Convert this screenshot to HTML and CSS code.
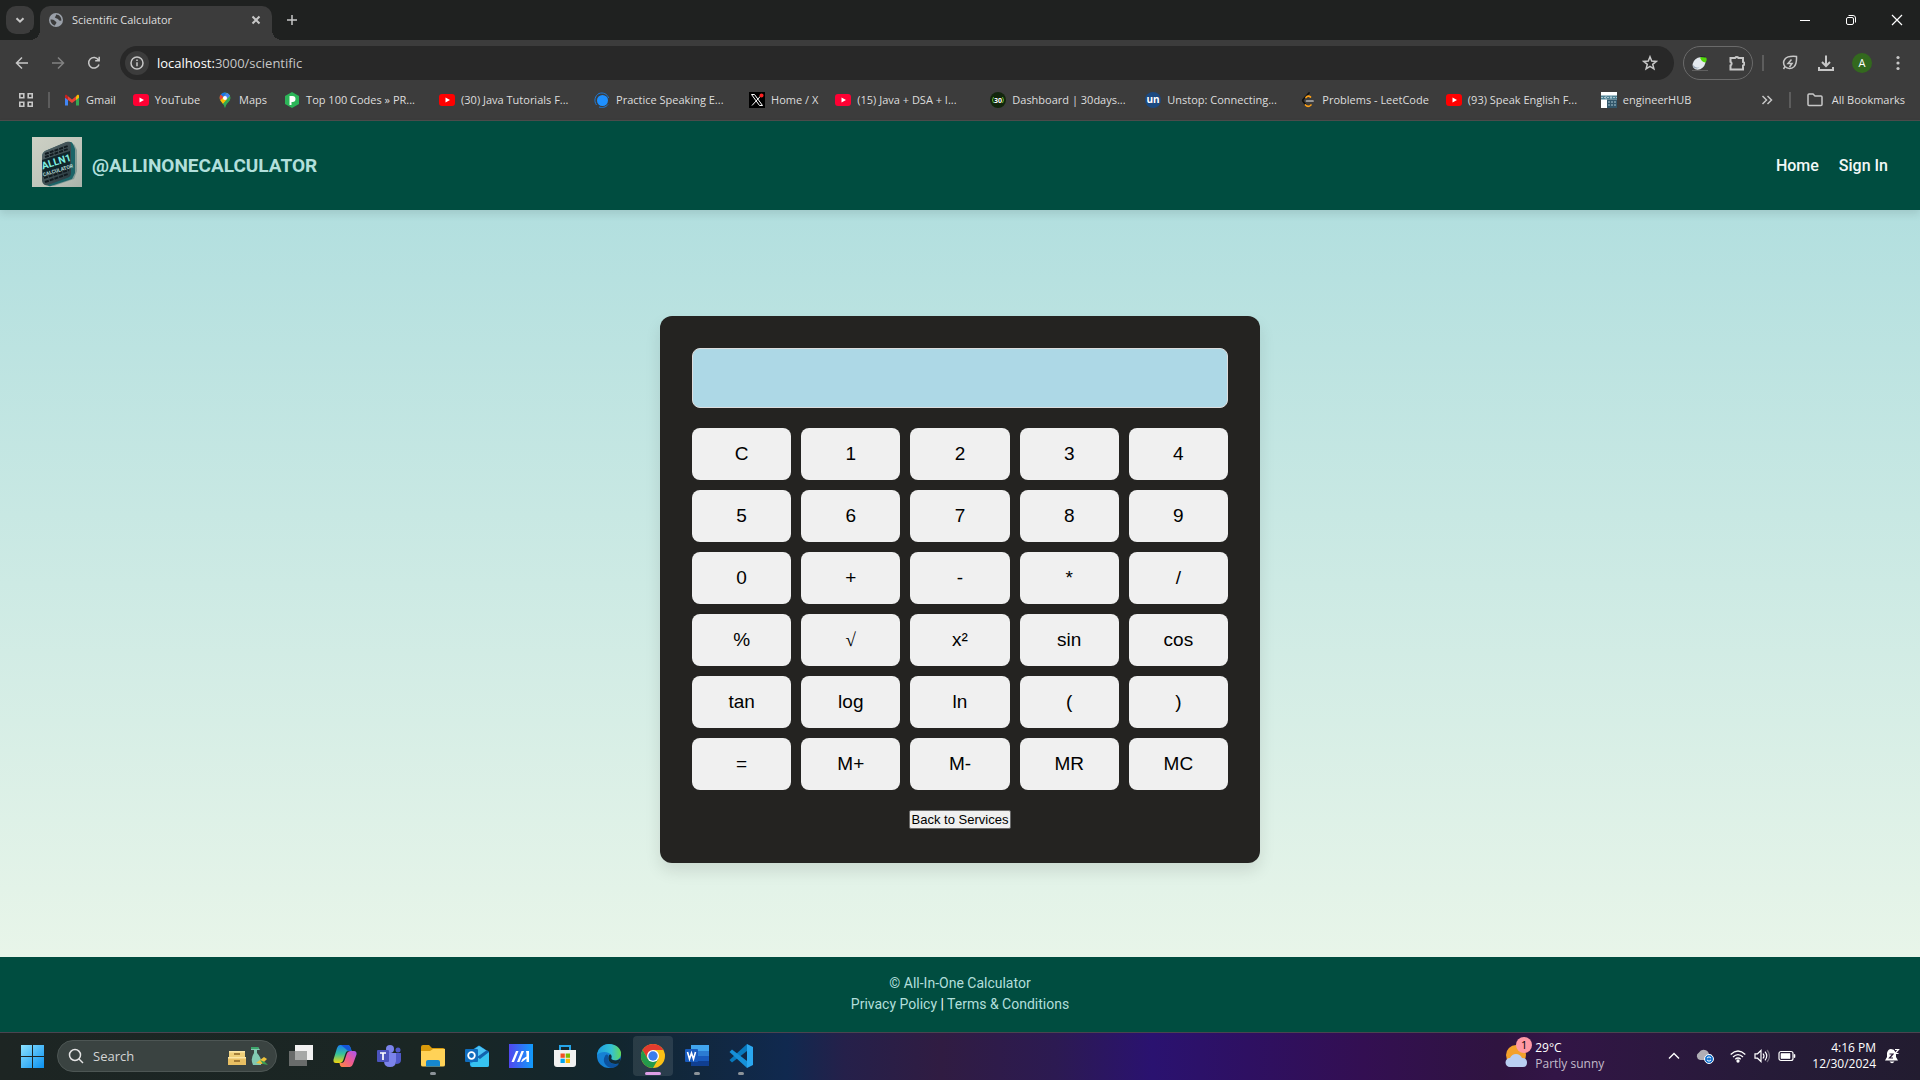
FILE: index.html
```html
<!DOCTYPE html>
<html lang="en">
<head>
<meta charset="utf-8">
<title>Scientific Calculator</title>
<link rel="stylesheet" href="styles.css">
</head>
<body>
<div class="desktop">

  <div class="tabstrip">
    <button class="tab-search" aria-label="Search tabs"><svg width="12" height="12" viewBox="0 0 12 12" class="line bold"><path d="M2.500 4.200 6 7.700 9.500 4.200"/></svg></button>
    <div class="tab">
      <svg width="14" height="14" viewBox="0 0 14 14"><circle cx="7" cy="7" r="7" fill="#9aa0a9"/><path d="M1.500 6.500c2 .2 3.500-.2 4.200 1.200.5 1 1.800.6 1.700 2-.1 1.400-1.300 1.300-1.500 2.800C3.500 12 1.400 9.500 1.500 6.500ZM7 1.500c-.3 1.500.2 1.900-1.300 2.600.6 1.500 2 1 3.200 1.800.9.600.7 1.900 2.500 1.800l1-.2c.2-3-2-6-5.400-6Z" fill="#3c3c3c"/></svg>
      <span class="tab-title">Scientific Calculator</span>
      <button class="bare" aria-label="Close tab"><svg width="14" height="14" viewBox="0 0 14 14" class="line bold"><path d="m3.500 3.500 7 7m0-7-7 7"/></svg></button>
    </div>
    <button class="bare new-tab" aria-label="New tab"><svg width="14" height="14" viewBox="0 0 14 14" class="line"><path d="M7 2v10M2 7h10"/></svg></button>
    <div class="window-controls">
      <button class="bare" aria-label="Minimize"><svg width="12" height="12" viewBox="0 0 12 12"><path d="M1 6.500h10" stroke="#fff"/></svg></button>
      <button class="bare" aria-label="Restore"><svg width="12" height="12" viewBox="0 0 12 12" fill="none" stroke="#fff"><rect x="1.500" y="3.500" width="7" height="7" rx="1.500"/><path d="M3.500 1.500H8A2.500 2.500 0 0 1 10.500 4v4.500"/></svg></button>
      <button class="bare" aria-label="Close"><svg width="12" height="12" viewBox="0 0 12 12" stroke="#fff" stroke-width="1.200"><path d="m1 1 10 10M11 1 1 11"/></svg></button>
    </div>
  </div>

  <div class="toolbar">
    <div class="nav-buttons">
      <button class="bare" aria-label="Back"><svg width="16" height="16" viewBox="0 0 16 16" class="line"><path d="M14 8H3M8 2.500 2.500 8 8 13.500"/></svg></button>
      <button class="bare dim" aria-label="Forward"><svg width="16" height="16" viewBox="0 0 16 16" class="line"><path d="M2 8h11M8 2.500 13.500 8 8 13.500"/></svg></button>
      <button class="bare" aria-label="Reload"><svg width="16" height="16" viewBox="0 0 16 16" class="line"><path d="M13 9.500A5.300 5.300 0 1 1 12.500 5M13.200 1.800v4H9.200"/></svg></button>
    </div>
    <div class="omnibox">
      <span class="site-info"><svg width="14" height="14" viewBox="0 0 14 14" class="line"><circle cx="7" cy="7" r="6"/><path d="M7 6.200v4M7 3.500v1.500"/></svg></span>
      <span class="url"><b>localhost:</b>3000/scientific</span>
      <button class="bare" aria-label="Bookmark this tab"><svg width="16" height="16" viewBox="0 0 16 16" class="line"><path d="m8 1.800 1.700 4.300 4.500.3-3.500 2.900 1.200 4.500L8 11.300l-3.900 2.500 1.200-4.500-3.500-2.900 4.500-.3z"/></svg></button>
    </div>
    <div class="extensions">
      <svg width="16" height="16" viewBox="0 0 16 16"><path d="M0 15.500h16" stroke="#606060"/><ellipse cx="7" cy="8.500" rx="7" ry="5.500" transform="rotate(-40 7 8.500)" fill="#e4e9ee"/><path d="M1 10c0 3 3 4.500 6.500 2.500-3 .5-5-.5-6.500-2.500" fill="#8fa0b0"/><path d="M8 2.500c1 3 2.500 4.500 5.500 5 1.500-2 1.500-4 .5-5-2-1-4-1-6 0" fill="#53d80a"/><path d="M8.500 1.500 13.500 2" stroke="#223"/></svg>
      <svg width="16" height="16" viewBox="0 0 16 16" class="line wide"><path d="M1.500 3H6a2 1.800 0 0 1 3.500 0H14v4a1.800 1.800 0 0 1 0 3.500v4H1.500v-4a2 2 0 0 0 0-3.600z"/></svg>
    </div>
    <span class="divider"></span>
    <div class="toolbar-end">
      <button class="bare" aria-label="Energy saver"><svg width="16" height="16" viewBox="0 0 16 16" class="line"><path d="M14.500 1.500C9 1 5 1.500 3 4c-1.800 2.300-1.500 5.500 0 7.500 2.300 2.500 6.500 2.500 9 .2 2.800-2.700 2.700-6.700 2.500-10.200ZM3 11.500 1.500 14M9.500 4.500 6 8.500h4L7.500 12"/></svg></button>
      <button class="bare" aria-label="Downloads"><svg width="18" height="18" viewBox="0 0 18 18" class="line bold"><path d="M9 1.500v10M5 8l4 4 4-4M2 13v3h14v-3"/></svg></button>
      <button class="avatar" aria-label="Profile">A</button>
      <button class="bare" aria-label="Menu"><svg width="16" height="16" viewBox="0 0 16 16" fill="#c7c7c7"><circle cx="8" cy="2.500" r="1.600"/><circle cx="8" cy="8" r="1.600"/><circle cx="8" cy="13.500" r="1.600"/></svg></button>
    </div>
  </div>

  <div class="bookmarks">
    <svg class="apps" width="14" height="14" viewBox="0 0 14 14" fill="none" stroke="#c7c7c7" stroke-width="1.600"><path d="M.8.800h4v4h-4zM9.200.800h4v4h-4zM.8 9.200h4v4h-4zM9.200 9.200h4v4h-4z"/></svg>
    <span class="divider"></span>
    <nav class="bookmark-list">
      <a href="#"><svg width="16" height="16" viewBox="0 0 16 16"><path d="M1 5v8.500h3V7z" fill="#4285f4"/><path d="M15 5v8.500h-3V7z" fill="#34a853"/><path d="M12 4.500V8l3-2.200V4c0-1.500-1.700-2-3 .5" fill="#fbbc04"/><path d="M4 4.300 8 7.500l4-3.200V8l-4 3-4-3z" fill="#ea4335"/><path d="M1 4c0-1.600 1.700-2 3 .3V8L1 5.800z" fill="#c5221f"/></svg><span>Gmail</span></a>
      <a href="#"><svg width="16" height="16" viewBox="0 0 16 16"><rect y="2" width="16" height="12" rx="3" fill="#ff0033"/><path d="m6.500 5.500 4.500 2.500-4.500 2.500z" fill="#fff"/></svg><span>YouTube</span></a>
      <a href="#"><svg width="16" height="16" viewBox="0 0 16 16"><path d="M2.600 6A5.400 5.400 0 0 1 13.400 6c0 4-4.400 4.500-5.400 10C7 10.500 2.600 10 2.600 6" fill="#34a853"/><path d="M3.800 2.500A5.400 5.400 0 0 1 10 .9L5.500 6.300z" fill="#1a73e8"/><path d="M3.800 2.500c-1.600 2-1.500 4-.4 6L6.500 5z" fill="#ea4335"/><path d="M10 .9 13 4 6 12c-.7-1.200-1.800-2.200-2.600-3.500z" fill="#fbbc04"/><path d="M10 .9c1.500.5 2.500 1.500 3 3L9.500 7.500 6.700 4.800z" fill="#4285f4"/><path d="M13 3.900c1.500 5-4 6-5 12.100-.2-1.500-1-3-2-4z" fill="#34a853"/><circle cx="8" cy="6" r="2" fill="#fff"/></svg><span>Maps</span></a>
      <a href="#" class="cut"><svg width="16" height="16" viewBox="0 0 16 16"><path d="m8 0 7 4v8l-7 4-7-4V4z" fill="#2cb558"/><path d="M5.500 4h3a3 3 0 0 1 0 6H7.500v3h-2z" fill="#fff"/></svg><span>Top 100 Codes » PR...</span></a>
      <a href="#" class="cut"><svg width="16" height="16" viewBox="0 0 16 16"><rect y="2" width="16" height="12" rx="3" fill="#f00"/><path d="m6.500 5.500 4.500 2.500-4.500 2.500z" fill="#fff"/></svg><span>(30) Java Tutorials F...</span></a>
      <a href="#" class="cut"><svg width="16" height="16" viewBox="0 0 16 16" fill="none" stroke="#1e78d5"><circle cx="8.500" cy="8.500" r="5.500" fill="#1e90ff" stroke="none"/><path d="M2.500 13C-.5 9 1 3.500 5 1.500c4-1.500 8.500.5 9.500 4.500M5 15c3 1 7 .5 9-2.500"/></svg><span>Practice Speaking E...</span></a>
      <a href="#"><svg width="16" height="16" viewBox="0 0 16 16"><path d="M0 0h16v16H0z" fill="#000"/><path d="M2.500 2.500h3l8 11h-3z" fill="none" stroke="#fff"/><path d="M13 2.500 3 13.500" stroke="#fff"/><circle cx="12.500" cy="3.500" r="2" fill="#f22"/></svg><span>Home / X</span></a>
      <a href="#" class="cut"><svg width="16" height="16" viewBox="0 0 16 16"><rect y="2" width="16" height="12" rx="3" fill="#ff0033"/><path d="m6.500 5.500 4.500 2.500-4.500 2.500z" fill="#fff"/></svg><span>(15) Java + DSA + I...</span></a>
      <a href="#" class="cut"><svg width="16" height="16" viewBox="0 0 16 16"><circle cx="8" cy="8" r="8" fill="#12260d"/><path d="M3.500 5q-2 3 0 6M12.500 5q2 3 0 6" fill="none" stroke="#63b832"/><text x="8" y="10.500" class="badge-30">30</text></svg><span>Dashboard | 30days...</span></a>
      <a href="#" class="cut"><svg width="16" height="16" viewBox="0 0 16 16"><circle cx="8" cy="8" r="8" fill="#1c4980"/><text x="8" y="11" class="badge-un">un</text></svg><span>Unstop: Connecting...</span></a>
      <a href="#"><svg width="16" height="16" viewBox="0 0 16 16" fill="none" stroke-width="1.700" stroke-linecap="round"><path d="M9 1 3.500 7Q2 8.500 3.500 10L6 13" stroke="#111"/><path d="M5.500 13q2.500 2.800 5.500 0M6 5.500q2-2.500 4.500-.5" stroke="#ffa116"/><path d="M6.500 9H13" stroke="#b3b3b3"/></svg><span>Problems - LeetCode</span></a>
      <a href="#" class="cut"><svg width="16" height="16" viewBox="0 0 16 16"><rect y="2" width="16" height="12" rx="3" fill="#f00"/><path d="m6.500 5.500 4.500 2.500-4.500 2.500z" fill="#fff"/></svg><span>(93) Speak English F...</span></a>
      <a href="#"><svg width="16" height="16" viewBox="0 0 16 16"><path d="M0 0h16v16H0z" fill="#fff"/><path d="M0 3.500h16v4H0z" fill="#4d8092"/><path d="M6 7.500h10V16H6z" fill="#31566a"/><path d="M0 5.500h16M7 10h8m-8 3h8M5 3v4m5-4v4" stroke="#a9c5d0" stroke-dasharray="2 1"/></svg><span>engineerHUB</span></a>
    </nav>
    <div class="bookmarks-end">
      <svg width="12" height="12" viewBox="0 0 12 12" class="line"><path d="m1.500 2 4 4-4 4M6.500 2l4 4-4 4"/></svg>
      <span class="divider"></span>
      <a href="#"><svg width="16" height="14" viewBox="0 0 16 14" class="line"><path d="M1 2q0-1 1-1h4l2 2h6q1 0 1 1v7.500q0 1-1 1H2q-1 0-1-1z"/></svg><span>All Bookmarks</span></a>
    </div>
  </div>

  <div class="page">
    <header class="site-header">
      <a class="brand" href="#">
        <svg class="logo" width="50" height="50" viewBox="0 0 50 50" role="img" aria-label="All-in-one calculator logo">
          <defs>
            <linearGradient id="paper" x1="0" y1="0" x2="1" y2="1"><stop offset="0" stop-color="#cdd0c4"/><stop offset=".6" stop-color="#bfc5bb"/><stop offset="1" stop-color="#a9b2aa"/></linearGradient>
            <linearGradient id="casing" x1="0" y1="0" x2="1" y2="1"><stop offset="0" stop-color="#59686b"/><stop offset="1" stop-color="#26383e"/></linearGradient>
          </defs>
          <path d="M0 0h50v50H0z" fill="url(#paper)"/>
          <path d="M14 46 22 49l20-7 3-8V13l-3-6z" fill="#6e8b89" opacity=".7"/>
          <path d="m13 14 22-9q5-1 6 2l2 5v24l-3 6-21 7q-4 1-7-3l-2-4V20q0-4 3-6" fill="#1c6468"/>
          <path d="m13 14 21-9q5-1 5 3v28q0 4-4 5l-19 7q-5 1-6-4V20q0-4 3-6" fill="url(#casing)"/>
          <path d="m13 17 23-8M13 20l23-8M12 41l25-8M13 45l23-8" stroke="#111b20" stroke-width="2" stroke-dasharray="4 1"/>
          <path d="m10 23 28-9v17l-27 9z" fill="#10252a"/>
          <g transform="rotate(-17 25 27)"><text x="25" y="28" class="logo-big">ALLN1</text><text x="24" y="35" class="logo-small">CALCULATOR</text></g>
        </svg>
        <span class="brand-name">@ALLINONECALCULATOR</span>
      </a>
      <nav class="site-nav"><a href="#">Home</a><a href="#">Sign In</a></nav>
    </header>

    <main class="stage">
      <div class="calculator">
        <input class="display" type="text" aria-label="Result" readonly>
        <div class="keys">
          <button>C</button><button>1</button><button>2</button><button>3</button><button>4</button>
          <button>5</button><button>6</button><button>7</button><button>8</button><button>9</button>
          <button>0</button><button>+</button><button>-</button><button>*</button><button>/</button>
          <button>%</button><button class="root">√</button><button>x²</button><button>sin</button><button>cos</button>
          <button>tan</button><button>log</button><button>ln</button><button>(</button><button>)</button>
          <button>=</button><button>M+</button><button>M-</button><button>MR</button><button>MC</button>
        </div>
        <button class="back">Back to Services</button>
      </div>
    </main>

    <footer class="site-footer">
      <p>© All-In-One Calculator</p>
      <p><a href="#">Privacy Policy</a> <span class="pipe">|</span> <a href="#">Terms &amp; Conditions</a></p>
    </footer>
  </div>

  <div class="taskbar">
    <button class="bare start" aria-label="Start"><svg width="24" height="24" viewBox="0 0 24 24"><defs><linearGradient id="win" x1="0" y1="0" x2="1" y2="1"><stop offset="0" stop-color="#8be2ff"/><stop offset="1" stop-color="#0a90f0"/></linearGradient></defs><path d="M1 1h11v11H1zM13 1h11v11H13zM1 13h11v11H1zM13 13h11v11H13z" fill="url(#win)"/></svg></button>
    <div class="search">
      <svg width="16" height="16" viewBox="0 0 16 16" fill="none" stroke="#e4e4e4" stroke-width="1.500"><circle cx="7" cy="7" r="5.500"/><path d="m11 11 4 4"/></svg>
      <input type="text" placeholder="Search" aria-label="Search">
      <svg width="40" height="20" viewBox="0 0 40 20"><path d="M1 5h16v6H1z" fill="#efcf79"/><path d="M0 11h18v8H0z" fill="#e8bf63"/><path d="M1 5h16v1.500H1zM0 11h18v1.500H0z" fill="#fbe6a5"/><path d="M6 8h6M6 15h6" stroke="#8c6626" stroke-width="1.500"/><path d="M23 1h7l2 3h-3v3q5 5 4 12h-8q-3-6 1-12V4h-3z" fill="#83c9b2"/><path d="M23 1h7l1 2h-8z" fill="#3ca56a"/><path d="m28 17 8-6 3 2-5 5z" fill="#eec23b"/><path d="m32 14 3 4 5 1-3-3z" fill="#3c9d54"/></svg>
    </div>
    <div class="apps-row">
      <button class="bare" aria-label="Task view"><svg width="24" height="24" viewBox="0 0 24 24"><path d="M6 1h18v15H6z" fill="#f1f1f1"/><path d="M0 7h18v15H0z" fill="#696c6b"/><path d="M6 7h12v9H6z" fill="#a6a8a7"/></svg></button>
      <button class="bare" aria-label="Copilot"><svg width="24" height="24" viewBox="0 0 24 24"><defs><linearGradient id="cop1" x1="0" y1="0" x2="0" y2="1"><stop offset="0" stop-color="#1a7cf0"/><stop offset=".5" stop-color="#35c29a"/><stop offset="1" stop-color="#f3d50d"/></linearGradient><linearGradient id="cop2" x1="1" y1="0" x2="0" y2="1"><stop offset="0" stop-color="#a955f4"/><stop offset=".5" stop-color="#ef5a91"/><stop offset="1" stop-color="#ff8a3c"/></linearGradient></defs><path d="M7 1h8q2 0 3 4l.7 2H15q-2 0-2.700 3l-2 6q-1 3-4 3H3q-3 0-2.500-3.500L4 4q1-3 3-3" fill="url(#cop1)"/><path d="M17 23H9q-2 0-2.500-4h2.500q2 0 2.700-3l2-6q1-3 4-3H21q3 0 2.500 3.500L20 20q-1 3-3 3" fill="url(#cop2)"/><path d="M8 1h7q2 0 3.500 6H15q-3-3-7-6" fill="#1455d8"/></svg></button>
      <button class="bare" aria-label="Teams"><svg width="24" height="24" viewBox="0 0 24 24"><circle cx="13" cy="5" r="4" fill="#7b83eb"/><circle cx="21" cy="6" r="2.500" fill="#5059c9"/><path d="M16 9h8v7q0 4-5 4z" fill="#5059c9"/><path d="M7 9h12v8q0 6-6 6t-6-6z" fill="#7b83eb"/><rect x="0" y="6" width="12" height="12" rx="1" fill="#4b53bc"/><path d="M3 9h6M6 9v7" stroke="#fff" stroke-width="1.700"/></svg></button>
      <button class="bare running" aria-label="File Explorer"><svg width="24" height="24" viewBox="0 0 24 24"><path d="M0 3q0-2 2-2h6l3 3h11q2 0 2 2v4H0z" fill="#d99a0b"/><path d="M0 7h9l3-2h12v16q0 1.500-2 1.500H2Q0 22.500 0 21z" fill="#ffd257"/><path d="M5 22.500V18q0-2 2-2h10q2 0 2 2v4.500z" fill="#1688cf"/></svg></button>
      <button class="bare" aria-label="Outlook"><svg width="24" height="24" viewBox="0 0 24 24"><path d="m4 8 9-6q1-1 2 0l9 6v13q0 2-2 2H7q-2 0-2-2z" fill="#1a94e0"/><path d="m7 7 7-5 8 5-7 8H8z" fill="#4cc4f5"/><path d="m5 20 19-12v13q0 2-2 2H7z" fill="#36c3f1"/><path d="m24 8-9 7-3-2 10-7z" fill="#1262ae"/><rect y="5" width="13" height="13" rx="1" fill="#0f6cbd"/><circle cx="6.500" cy="11.500" r="3.300" fill="none" stroke="#fff" stroke-width="1.800"/></svg></button>
      <button class="bare" aria-label="MyASUS"><svg width="24" height="24" viewBox="0 0 24 24"><defs><linearGradient id="my" x1="0" y1="0" x2="1" y2="0"><stop offset="0" stop-color="#5146ef"/><stop offset="1" stop-color="#119cfb"/></linearGradient></defs><path d="M0 0h24v24H0z" fill="url(#my)"/><path d="M2.500 18 7 7h2.500L5 18zM8 18l4.500-11H15l-4.500 11zM17 7h3v11h-2.500v-3.500L13 18h-1l1.500-3 4-2.500V10z" fill="#fff"/></svg></button>
      <button class="bare" aria-label="Microsoft Store"><svg width="24" height="24" viewBox="0 0 24 24"><path d="M7 6V2h10v4" fill="none" stroke="#26a5e8" stroke-width="2"/><path d="M1 6h22v14q0 3-3 3H4q-3 0-3-3z" fill="#f1f1f1"/><path d="M7.500 9.500h4.300v4.300H7.500z" fill="#f25022"/><path d="M12.700 9.500H17v4.300h-4.300z" fill="#7fba00"/><path d="M7.500 14.700h4.300V19H7.500z" fill="#00a4ef"/><path d="M12.700 14.700H17V19h-4.300z" fill="#ffb900"/></svg></button>
      <button class="bare" aria-label="Edge"><svg width="24" height="24" viewBox="0 0 24 24"><defs><linearGradient id="edge" x1="0" y1="0" x2="1" y2="0"><stop offset="0" stop-color="#1b9de2"/><stop offset=".6" stop-color="#35c1d2"/><stop offset="1" stop-color="#63d957"/></linearGradient></defs><circle cx="12" cy="12" r="12" fill="#1681d4"/><path d="M0 11C1 4 6 0 12 0c8 0 13 6 12 11-1 4-4 6-8 5-3-1-1-2-1.500-4C13 8 5 6 0 11" fill="url(#edge)"/><path d="M8 12c-3 5 0 11 7 12 3-.5 6-2 7-4.500-5 2-12-.5-11-7.500 0-2-2-2-3 0" fill="#0c529f"/><path d="M14.500 12c.5 2-1.500 3 1.500 4 3 1 6 0 7.500-2l-1 5c-5 2.500-12 0-11-6 .5-3 2.500-3 3-1" fill="#132c38"/></svg></button>
      <button class="bare running current" aria-label="Chrome"><svg width="24" height="24" viewBox="0 0 24 24"><circle cx="12" cy="12" r="12" fill="#fbc116"/><path d="M12 0a12 12 0 0 0-10.400 6l5.200 9L12 6h10.400A12 12 0 0 0 12 0" fill="#e33b2e"/><path d="M1.600 6A12 12 0 0 0 12 24l5.200-9H6.800z" fill="#249a4b"/><circle cx="12" cy="12" r="6" fill="#fff"/><circle cx="12" cy="12" r="4.700" fill="#3b7ded"/></svg></button>
      <button class="bare running" aria-label="Word"><svg width="24" height="24" viewBox="0 0 24 24"><path d="M6 1h18v6H6z" fill="#41a5ee"/><path d="M6 7h18v5H6z" fill="#2b7cd3"/><path d="M6 12h18v5H6z" fill="#185abd"/><path d="M6 17h18v5H6z" fill="#103f91"/><rect y="5" width="13" height="13" rx="1" fill="#185abd"/><path d="m2.500 8 2 7 2-6 2 6 2-7" fill="none" stroke="#fff" stroke-width="1.600"/></svg></button>
      <button class="bare running" aria-label="Visual Studio Code"><svg width="24" height="24" viewBox="0 0 24 24"><path d="m18 0 6 3v18l-6 3z" fill="#2aa7f0"/><path d="M18 0v7L3 18.500.500 16z" fill="#0879be"/><path d="M18 24v-7L3 5.500.500 8z" fill="#1690d8"/></svg></button>
    </div>
    <div class="weather">
      <span class="weather-icon">
        <svg width="24" height="24" viewBox="0 0 24 24"><circle cx="11" cy="11" r="10" fill="#f3a12b"/><path d="M5 23a4.500 4.500 0 0 1 0-9q2-4 6-4t6 4q5 0 5 4.500T18 23z" fill="#b9cff2"/></svg>
        <span class="weather-badge">1</span>
      </span>
      <span class="two-line"><span>29°C</span><span class="muted">Partly sunny</span></span>
    </div>
    <div class="tray">
      <svg width="12" height="12" viewBox="0 0 12 12" fill="none" stroke="#fff" stroke-width="1.400"><path d="m1 8.500 5-5 5 5"/></svg>
      <svg width="18" height="16" viewBox="0 0 18 16"><path d="M4 12a4 4 0 0 1-1-7.500Q5 1 9 2q3 .5 4 4h2q3 3 0 6z" fill="#b0aeb5"/><circle cx="13" cy="11" r="4.500" fill="#1874cf" stroke="#fff"/><path d="M11 10q2-2.500 4 0m0 2q-2 2.500-4 0" fill="none" stroke="#fff"/></svg>
      <div class="tray-group">
        <svg width="16" height="16" viewBox="0 0 16 16" fill="none" stroke="#fff" stroke-width="1.300"><path d="M.7 6.500q7.300-7 14.600 0M3 9q5-4.800 10 0M5.300 11.300q2.700-2.500 5.400 0"/><circle cx="8" cy="13" r="1" fill="#fff"/></svg>
        <svg width="16" height="16" viewBox="0 0 16 16" fill="none" stroke="#fff" stroke-width="1.200"><path d="M1 5.800h2.500L7 2.500v11L3.500 10.200H1zM9 5.500q2 2.500 0 5M11 3.700q3.500 4.300 0 8.600"/><path d="M13 2q5 6 0 12" stroke="#716b7b"/></svg>
        <svg width="18" height="16" viewBox="0 0 18 16"><rect x="1" y="3.500" width="14" height="9" rx="2" fill="none" stroke="#fff" stroke-width="1.200"/><path d="M3 5.500h9v5H3zM16 6.500h1v3h-1z" fill="#fff" stroke="#fff" stroke-width=".6"/></svg>
      </div>
      <span class="two-line clock"><span>4:16 PM</span><span>12/30/2024</span></span>
      <svg width="16" height="16" viewBox="0 0 16 16"><path d="M7 1q3 0 5 3v5l2 3.500H1L3 9V5q1-4 4-4M5.500 13.500h5q-2.500 3.500-5 0" fill="#fff"/><path d="M5.500 6h3.500L5.500 10h3.500" fill="none" stroke="#291a38" stroke-width="1.200"/><path d="M10 1h5.500v5.500H12z" fill="#291a38"/><path d="M11 1.500h3.500l-3.500 4h3.500" fill="none" stroke="#fff" stroke-width="1.200"/></svg>
    </div>
  </div>
</div>
</body>
</html>
```
FILE: styles.css
```css
* { box-sizing: border-box; }

body {
  margin: 0;
  font-family: "Open Sans", "Noto Sans", sans-serif;
  font-size: 11px;
  line-height: 16px;
  color: #dedede;
}

a { color: inherit; text-decoration: none; }
button { font-family: inherit; cursor: pointer; }
svg { display: block; flex: none; }

.desktop {
  display: flex;
  flex-direction: column;
  min-height: 100vh;
}

.bare {
  display: grid;
  place-items: center;
  padding: 0;
  border: 0;
  background: none;
}

.line { fill: none; stroke: #c7c7c7; stroke-width: 1.500; }
.line.bold, .line.wide { stroke-width: 2; }
.dim { opacity: 0.5; }

.divider {
  flex: none;
  width: 2px;
  height: 16px;
  background: #5d5d5d;
}

/* Browser window */
.tabstrip {
  display: flex;
  align-items: flex-start;
  height: 40px;
  padding: 6px 0 0 6px;
  background: #1f2120;
}

.tab-search {
  display: grid;
  place-items: center;
  width: 28px;
  height: 28px;
  padding: 0;
  border: 0;
  border-radius: 10px;
  background: #3c3c3c;
}

.tab {
  position: relative;
  display: flex;
  align-items: center;
  gap: 9px;
  width: 232px;
  height: 34px;
  margin-left: 6px;
  padding: 0 9px 6px;
  border-radius: 10px 10px 0 0;
  background: #3c3c3c;
}

.tab::before,
.tab::after {
  content: "";
  position: absolute;
  bottom: 0;
  width: 10px;
  height: 10px;
}
.tab::before { left: -10px; background: radial-gradient(circle at 0 0, #1f2120 10px, #3c3c3c 10px); }
.tab::after { right: -10px; background: radial-gradient(circle at 100% 0, #1f2120 10px, #3c3c3c 10px); }

.tab-title { flex: 1; }
.new-tab { width: 40px; height: 28px; }

.window-controls { display: flex; margin-left: auto; }
.window-controls .bare { width: 46px; height: 28px; }

.toolbar {
  display: flex;
  align-items: center;
  padding: 6px 8px 0 4px;
  background: #3c3c3c;
}

.nav-buttons { display: flex; margin-right: 8px; }
.nav-buttons .bare { width: 36px; height: 34px; }

.omnibox {
  display: flex;
  flex: 1;
  align-items: center;
  height: 34px;
  padding: 0 16px 0 5px;
  border-radius: 17px;
  background: #282828;
}
.site-info {
  display: grid;
  place-items: center;
  width: 24px;
  height: 24px;
  border-radius: 50%;
  background: #3c3c3c;
}
.url { flex: 1; margin-left: 8px; font-size: 13px; color: #c7c7c7; }
.url b { font-weight: 400; color: #fff; }

.extensions {
  display: flex;
  align-items: center;
  justify-content: space-between;
  width: 70px;
  height: 34px;
  margin: 0 9px;
  padding: 0 7px 0 8px;
  border: 1px solid #6a6a6a;
  border-radius: 17px;
}

.toolbar-end { display: flex; align-items: center; margin-left: 8px; }
.toolbar-end .bare { width: 36px; height: 34px; }
.toolbar-end .bare:last-child { width: 28px; margin-left: 12px; }
.avatar {
  width: 20px;
  height: 20px;
  margin-left: 8px;
  padding: 0;
  border: 0;
  border-radius: 50%;
  background: #33691e;
  color: #fff;
  font-size: 11px;
  line-height: 20px;
}

.bookmarks {
  display: flex;
  align-items: center;
  height: 41px;
  padding: 0 15px 0 19px;
  border-bottom: 1px solid #4c4c4c;
  background: #3c3c3c;
}
.bookmarks .apps { margin-right: 15px; }
.bookmark-list { display: flex; gap: 17px; margin-left: 14px; white-space: nowrap; }
.bookmark-list a { display: flex; align-items: center; gap: 6px; }
.bookmark-list .cut span { width: 116px; }
.badge-30 { font: 700 7px "Open Sans", sans-serif; fill: #fff; text-anchor: middle; }
.badge-un { font: 700 10px "Open Sans", sans-serif; fill: #fff; text-anchor: middle; }

.bookmarks-end {
  display: flex;
  align-items: center;
  gap: 16px;
  margin-left: auto;
  white-space: nowrap;
}
.bookmarks-end a { display: flex; align-items: center; gap: 9px; }

/* Web page */
.page {
  display: flex;
  flex: 1;
  flex-direction: column;
  font-family: Roboto, sans-serif;
}

.site-header {
  position: relative;
  display: flex;
  align-items: center;
  justify-content: space-between;
  padding: 16px 32px;
  background: #004d40;
  box-shadow: 0 4px 8px rgba(0, 0, 0, 0.1);
}
.brand { display: flex; align-items: center; gap: 10px; min-height: 57px; }
.logo { align-self: flex-start; }
.logo-big { font: 700 10px Roboto, sans-serif; fill: #7ff0e2; text-anchor: middle; }
.logo-small { font: 700 5px Roboto, sans-serif; fill: #b9dcd8; text-anchor: middle; }
.brand-name { font-size: 19px; font-weight: 700; line-height: 24px; color: #b2dfdb; }
.site-nav { display: flex; gap: 20px; font-size: 16px; font-weight: 500; line-height: 24px; color: #f2f8f7; }

.stage {
  display: flex;
  flex: 1;
  align-items: center;
  justify-content: center;
  padding-top: 12px;
  background: linear-gradient(#b2dfdf, #e8f5e9);
}

.calculator {
  display: flex;
  flex-direction: column;
  align-items: center;
  gap: 20px;
  width: 100%;
  max-width: 600px;
  padding: 32px 32px 34px;
  border-radius: 12px;
  background: #242321;
  box-shadow: 0 8px 16px rgba(0, 0, 0, 0.1);
}

.display {
  width: 100%;
  height: 60px;
  padding: 0 16px;
  border: 1px solid #ddd;
  border-radius: 8px;
  background: #add8e6;
  font-size: 24px;
  text-align: right;
}

.keys {
  display: grid;
  grid-template-columns: repeat(5, 1fr);
  gap: 10px;
  width: 100%;
}
.keys button {
  padding: 15px 0;
  border: 0;
  border-radius: 8px;
  background: #f0f0f0;
  color: #000;
  font: 19px/22px "Liberation Sans", Arial, sans-serif;
}
.keys .root { font-family: "Liberation Serif", serif; }

.back {
  padding: 1px 2px;
  border: 1px solid #6b6b6b;
  border-radius: 2px;
  background: #efefef;
  color: #000;
  font: 13px/15px "Liberation Sans", Arial, sans-serif;
}

.site-footer {
  padding: 16px 16px 17px;
  background: #004d40;
  color: #b2dfdb;
  font-size: 14px;
  line-height: 21px;
  text-align: center;
}
.site-footer p { margin: 0; }
.pipe { color: #fff; }

/* Desktop taskbar */
.taskbar {
  display: flex;
  align-items: center;
  height: 48px;
  box-shadow: inset 0 1px #4a4450;
  background: linear-gradient(90deg, #1d2523 0%, #1a2624 22%, #12262e 32%, #10294f 41%, #25204a 44%, #301c42 49%, #2c1a52 55%, #2a1270 60%, #2e1062 65%, #330f52 71%, #2f1440 78%, #321546 81%, #261b38 92%, #221c30 100%);
}
.start { width: 24px; height: 40px; margin: 0 13px 0 20px; }

.search {
  display: flex;
  align-items: center;
  gap: 9px;
  width: 220px;
  height: 32px;
  padding: 0 8px 0 10px;
  border: 1px solid #4d5654;
  border-radius: 16px;
  background: #3a4341;
}
.search input {
  flex: 1;
  min-width: 0;
  padding: 0;
  border: 0;
  background: none;
  font: 13px/18px "Open Sans", sans-serif;
}
.search input::placeholder { color: #d3d5d5; }

.apps-row { display: flex; gap: 4px; margin-left: 4px; }
.apps-row .bare { position: relative; width: 40px; height: 40px; border-radius: 4px; }
.running::after {
  content: "";
  position: absolute;
  bottom: 1px;
  left: 17px;
  width: 6px;
  height: 3px;
  border-radius: 2px;
  background: #8c9399;
}
.apps-row .current { background: rgba(255, 255, 255, 0.1); }
.current::after { left: 12px; width: 16px; background: #dd9ee6; }

.weather { display: flex; align-items: center; gap: 6px; margin-left: auto; }
.weather-icon { position: relative; }
.weather-badge {
  position: absolute;
  top: -7px;
  right: -3px;
  width: 16px;
  height: 16px;
  border-radius: 50%;
  background: #ff99a4;
  color: #000;
  text-align: center;
}
.two-line { display: flex; flex-direction: column; font-size: 12px; color: #fff; }
.muted { color: #c4bccb; }

.tray { display: flex; align-items: center; gap: 16px; margin: 0 20px 0 64px; }
.tray-group { display: flex; gap: 8px; }
.clock { margin-right: -8px; text-align: right; }
```
